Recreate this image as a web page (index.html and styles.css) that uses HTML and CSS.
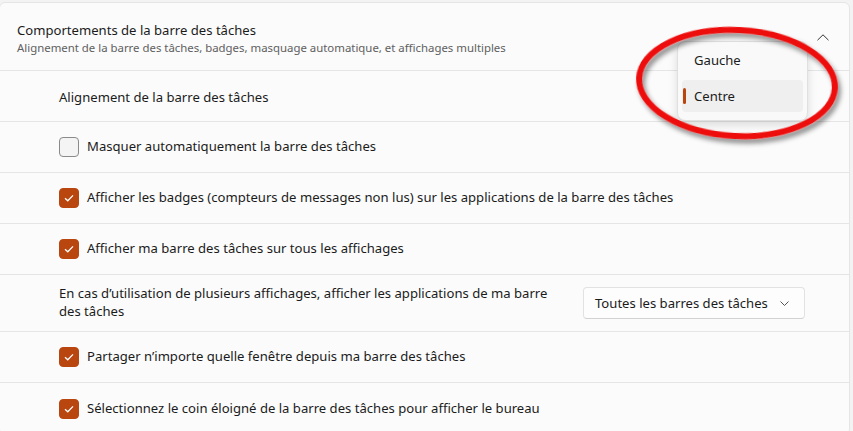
FILE: index.html
```html
<!DOCTYPE html>
<html lang="fr">
<head>
<meta charset="utf-8">
<link rel="stylesheet" href="styles.css">
</head>
<body>
<div class="card">
  <div class="header">
    <div class="htext">
      <div class="title">Comportements de la barre des tâches</div>
      <div class="subtitle">Alignement de la barre des tâches, badges, masquage automatique, et affichages multiples</div>
    </div>
    <svg class="chev-up" width="12" height="7" viewBox="0 0 12 7"><path d="M0.5 6.2 L6 0.8 L11.5 6.2" fill="none" stroke="#333" stroke-width="1"/></svg>
  </div>
  <div class="row first"><span class="label">Alignement de la barre des tâches</span></div>
  <div class="row"><span class="cb"></span><span class="label">Masquer automatiquement la barre des tâches</span></div>
  <div class="row"><span class="cb on"><svg width="12" height="10" viewBox="0 0 12 10"><path d="M2 5.2 L4.8 7.8 L10 2.4" fill="none" stroke="#fff" stroke-width="1.3"/></svg></span><span class="label">Afficher les badges (compteurs de messages non lus) sur les applications de la barre des tâches</span></div>
  <div class="row"><span class="cb on"><svg width="12" height="10" viewBox="0 0 12 10"><path d="M2 5.2 L4.8 7.8 L10 2.4" fill="none" stroke="#fff" stroke-width="1.3"/></svg></span><span class="label">Afficher ma barre des tâches sur tous les affichages</span></div>
  <div class="row tall">
    <span class="label wrap">En cas d’utilisation de plusieurs affichages, afficher les applications de ma barre des tâches</span>
    <div class="select"><span>Toutes les barres des tâches</span><svg width="9" height="5" viewBox="0 0 9 5"><path d="M0.5 0.5 L4.5 4.5 L8.5 0.5" fill="none" stroke="#555" stroke-width="1"/></svg></div>
  </div>
  <div class="row"><span class="cb on"><svg width="12" height="10" viewBox="0 0 12 10"><path d="M2 5.2 L4.8 7.8 L10 2.4" fill="none" stroke="#fff" stroke-width="1.3"/></svg></span><span class="label">Partager n’importe quelle fenêtre depuis ma barre des tâches</span></div>
  <div class="row last"><span class="cb on"><svg width="12" height="10" viewBox="0 0 12 10"><path d="M2 5.2 L4.8 7.8 L10 2.4" fill="none" stroke="#fff" stroke-width="1.3"/></svg></span><span class="label">Sélectionnez le coin éloigné de la barre des tâches pour afficher le bureau</span></div>
</div>
<div class="menu">
  <div class="item">Gauche</div>
  <div class="item sel"><span class="bar"></span>Centre</div>
</div>
<svg class="ring" width="853" height="431" viewBox="0 0 853 431">
  <defs>
    <filter id="sh" x="-20%" y="-30%" width="140%" height="160%">
      <feDropShadow dx="3" dy="4" stdDeviation="2.5" flood-color="#000" flood-opacity="0.45"/>
    </filter>
  </defs>
  <ellipse cx="737" cy="83" rx="98" ry="53" fill="none" stroke="#ee1111" stroke-width="6" filter="url(#sh)" transform="rotate(3 737 83)"/>
</svg>
</body>
</html>
```
FILE: styles.css
```css
* { box-sizing: border-box; }
html, body { margin: 0; padding: 0; }
body {
  background: #f3f3f3;
  width: 853px;
  height: 431px;
  overflow: hidden;
  position: relative;
  font-family: "Noto Sans", "Segoe UI", sans-serif;
  color: #1b1b1b;
  font-size: 13.1px;
}
.card {
  margin: 2px 3px 0 -1px;
  background: #fbfbfb;
  border: 1px solid #e5e5e5;
  border-radius: 6px;
}
.header {
  height: 68px;
  display: flex;
  align-items: center;
  padding: 2px 20px 0 17px;
  border-bottom: 1px solid #e5e5e5;
}
.htext { flex: 1; }
.title { font-size: 13.1px; line-height: 20px; }
.subtitle { font-size: 11.4px; line-height: 16px; color: #606060; }
.row {
  height: 51px;
  display: flex;
  align-items: center;
  padding-left: 59px;
  border-bottom: 1px solid #e5e5e5;
}
.row .label { margin-top: -2px; }
.row.first .label { margin-top: 1px; }
.row.tall { height: 57px; justify-content: space-between; padding-right: 44px; }
.row.last { border-bottom: none; height: 51px; }
.label { font-size: 13.1px; line-height: 18px; }
.label.wrap { width: 500px; }
.cb {
  width: 20px;
  height: 20px;
  border-radius: 4px;
  border: 1px solid #8a8a8a;
  background: #f4f4f4;
  margin-right: 8px;
  display: flex;
  align-items: center;
  justify-content: center;
  flex: none;
}
.cb.on { background: #b9450f; border-color: #b9450f; }
.select {
  width: 222px;
  height: 32px;
  border: 1px solid #e2e2e2;
  border-bottom-color: #d2d2d2;
  border-radius: 4px;
  background: #fdfdfd;
  display: flex;
  align-items: center;
  justify-content: space-between;
  padding: 0 15px 0 11px;
  font-size: 13.1px;
}
.menu {
  position: absolute;
  left: 677px;
  top: 41px;
  width: 131px;
  height: 80px;
  background: #f9f9f9;
  border: 1px solid #e0e0e0;
  border-radius: 8px;
  box-shadow: 0 4px 10px rgba(0,0,0,0.13);
  padding: 2px 4px;
}
.item {
  height: 32px;
  display: flex;
  align-items: center;
  padding-left: 12px;
  position: relative;
  border-radius: 4px;
  margin-bottom: 4px;
}
.item.sel { background: #efefef; }
.bar {
  position: absolute;
  left: 1px;
  top: 8px;
  width: 3px;
  height: 16px;
  border-radius: 2px;
  background: #b9450f;
}
.ring { position: absolute; left: 0; top: 0; pointer-events: none; }
```
